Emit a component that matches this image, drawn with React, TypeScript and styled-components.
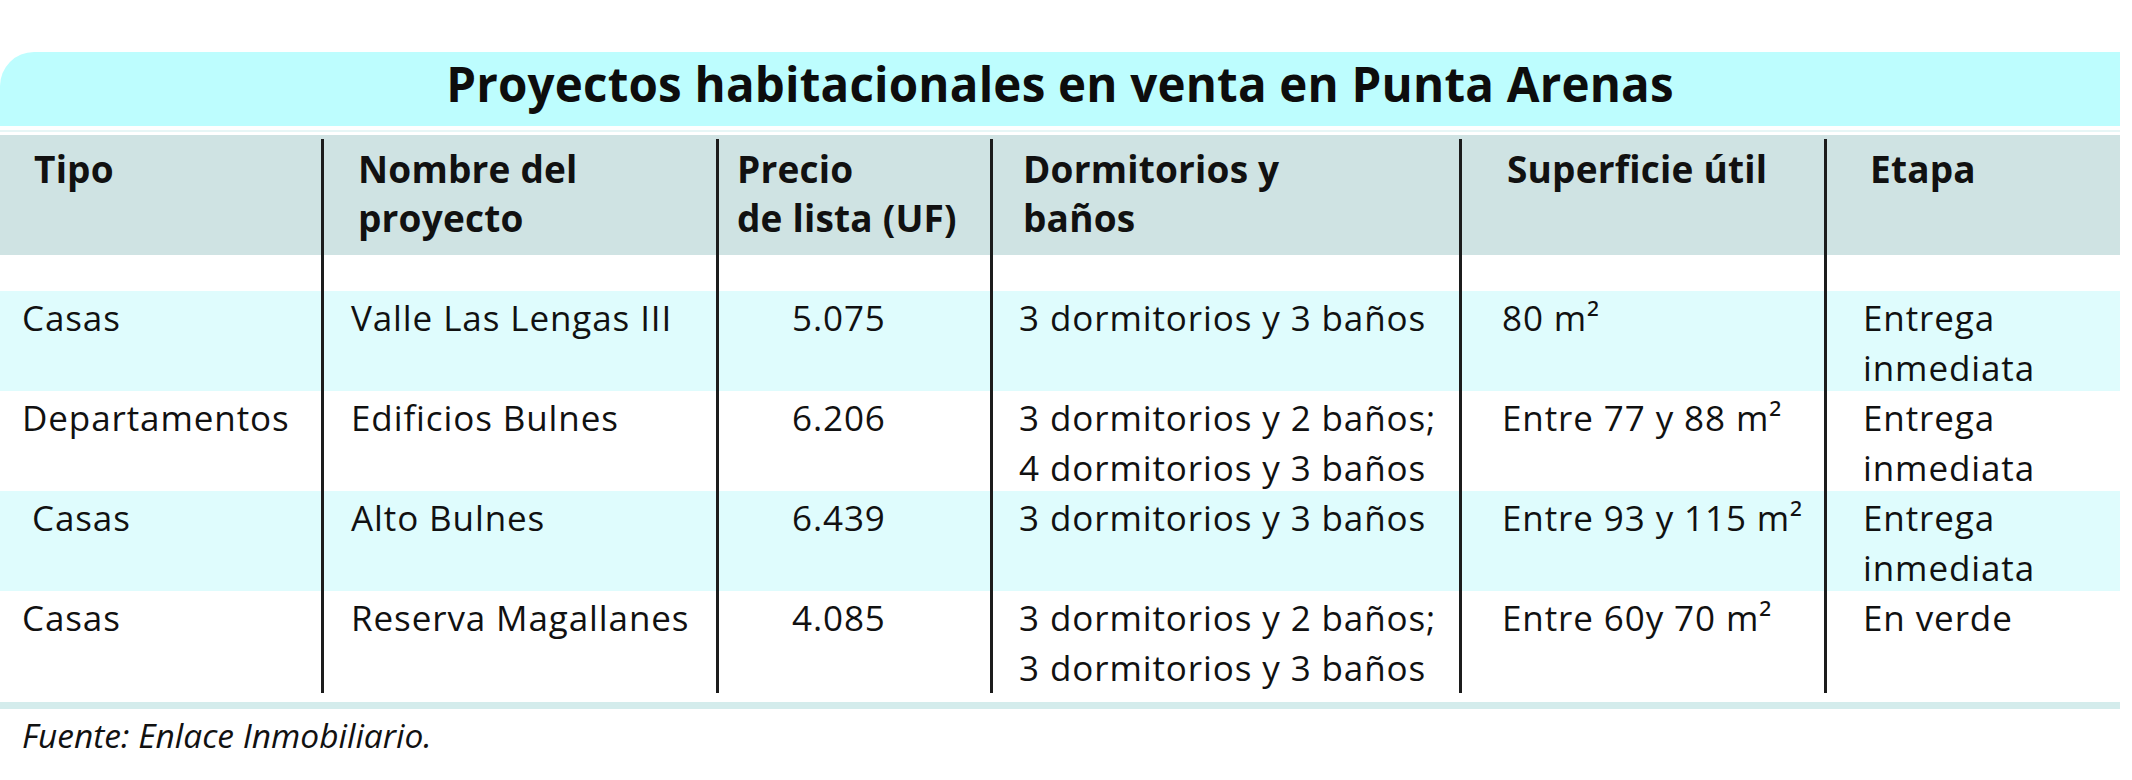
import styled, { createGlobalStyle } from "styled-components";

const GlobalStyle = createGlobalStyle`
  html, body {
    margin: 0;
    padding: 0;
    background: #ffffff;
  }
  body {
    font-family: "Open Sans", "Noto Sans", sans-serif;
    color: #111111;
  }
`;

const Page = styled.div`
  width: 2120px;
  padding-top: 52px;
`;

const TitleBand = styled.header`
  height: 74px;
  background-color: #bdfdfe;
  border-top-left-radius: 34px;
  text-align: center;
  font-weight: 700;
  font-size: 47.5px;
  line-height: 64px;
  letter-spacing: 0.2px;
  color: #0d0d0d;
`;

const Separator = styled.div`
  height: 2px;
  margin: 4px 0 3px;
  background-color: #e6f6f6;
`;

const Grid = styled.div<{ $bg?: string; $height: number }>`
  display: grid;
  grid-template-columns: 321px 395px 274px 469px 365px 296px;
  height: ${(p) => p.$height}px;
  background-color: ${(p) => p.$bg ?? "transparent"};
`;

const HeaderRow = styled(Grid)`
  padding-top: 4px;
  box-sizing: border-box;
`;

const Cell = styled.div<{ $pad: number; $divider: boolean }>`
  padding-left: ${(p) => p.$pad}px;
  border-left: ${(p) => (p.$divider ? "3px solid #1c1c1c" : "none")};
  white-space: nowrap;
`;

const HeadCell = styled(Cell)`
  padding-top: 5px;
  font-weight: 700;
  font-size: 37px;
  line-height: 49px;
  letter-spacing: 0.2px;
`;

const BodyCell = styled(Cell)`
  padding-top: 2px;
  font-size: 35px;
  line-height: 50px;
  letter-spacing: 0.9px;
`;

const BottomBand = styled.div`
  height: 7px;
  margin-top: 11px;
  background-color: #d4ecec;
`;

const Source = styled.p`
  margin: 4px 0 0;
  padding-left: 22px;
  font-style: italic;
  font-size: 33.5px;
  line-height: 44px;
`;

const headPads = [34, 34, 18, 30, 45, 43];
const bodyPads = [22, 27, 73, 26, 40, 36];

const headers: string[][] = [
  ["Tipo"],
  ["Nombre del", "proyecto"],
  ["Precio", "de lista (UF)"],
  ["Dormitorios y", "baños"],
  ["Superficie útil"],
  ["Etapa"],
];

type Project = {
  cells: string[][];
  tinted: boolean;
};

const projects: Project[] = [
  {
    tinted: true,
    cells: [
      ["Casas"],
      ["Valle Las Lengas III"],
      ["5.075"],
      ["3 dormitorios y 3 baños"],
      ["80 m²"],
      ["Entrega", "inmediata"],
    ],
  },
  {
    tinted: false,
    cells: [
      ["Departamentos"],
      ["Edificios Bulnes"],
      ["6.206"],
      ["3 dormitorios y 2 baños;", "4 dormitorios y 3 baños"],
      ["Entre 77 y 88 m²"],
      ["Entrega", "inmediata"],
    ],
  },
  {
    tinted: true,
    cells: [
      ["\u00A0Casas"],
      ["Alto Bulnes"],
      ["6.439"],
      ["3 dormitorios y 3 baños"],
      ["Entre 93 y 115 m²"],
      ["Entrega", "inmediata"],
    ],
  },
  {
    tinted: false,
    cells: [
      ["Casas"],
      ["Reserva Magallanes"],
      ["4.085"],
      ["3 dormitorios y 2 baños;", "3 dormitorios y 3 baños"],
      ["Entre 60y 70 m²"],
      ["En verde"],
    ],
  },
];

const Lines = ({ lines }: { lines: string[] }) => (
  <>
    {lines.map((line, i) => (
      <div key={i}>{line}</div>
    ))}
  </>
);

const App = () => {
  return (
    <>
      <GlobalStyle />
      <Page>
        <TitleBand>Proyectos habitacionales en venta en Punta Arenas</TitleBand>
        <Separator />
        <HeaderRow $bg="#cfe3e3" $height={120}>
          {headers.map((lines, i) => (
            <HeadCell key={i} $pad={headPads[i]} $divider={i > 0}>
              <Lines lines={lines} />
            </HeadCell>
          ))}
        </HeaderRow>
        <Grid $height={36}>
          {headers.map((_, i) => (
            <Cell key={i} $pad={0} $divider={i > 0} />
          ))}
        </Grid>
        {projects.map((row, r) => (
          <Grid key={r} $height={100} $bg={row.tinted ? "#dffcfd" : "#ffffff"}>
            {row.cells.map((lines, i) => (
              <BodyCell key={i} $pad={bodyPads[i]} $divider={i > 0}>
                <Lines lines={lines} />
              </BodyCell>
            ))}
          </Grid>
        ))}
        <BottomBand />
        <Source>Fuente: Enlace Inmobiliario.</Source>
      </Page>
    </>
  );
};

export default App;
